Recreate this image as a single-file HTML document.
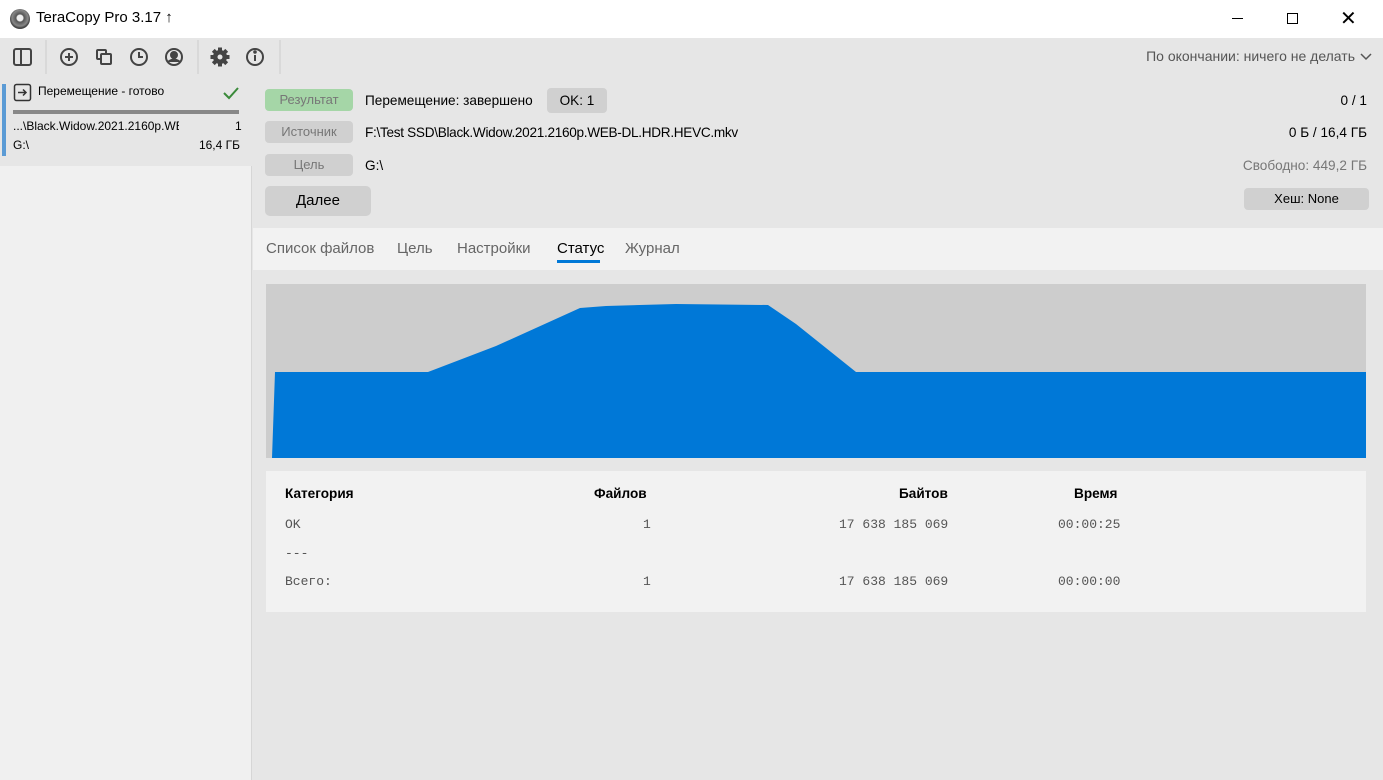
<!DOCTYPE html>
<html><head><meta charset="utf-8"><style>
*{margin:0;padding:0;box-sizing:border-box}
body{width:1383px;height:780px;overflow:hidden;background:#e6e6e6;font-family:"Segoe UI","Liberation Sans",sans-serif;font-size:13.6px;color:#000;position:relative}
.abs{position:absolute}
.title{left:0;top:0;width:1383px;height:38px;background:#fff}
.tb{left:0;top:38px;width:1383px;height:40px;background:#e6e6e6}
.side{left:0;top:78px;width:252px;height:702px;background:#f0f0f0;border-right:1px solid #d6d6d6}
.pill{position:absolute;left:265px;width:88px;height:22px;border-radius:4px;background:#d0d0d0;color:#777;font-size:13px;text-align:center;line-height:22px}
.txt{position:absolute;font-size:13.6px;white-space:nowrap}
.mono{font-family:"Liberation Mono",monospace;font-size:13px;color:#555}
.tab{position:absolute;top:240px;font-size:15px;color:#666}
</style></head><body>
<div class="abs title">
 <div class="abs" style="left:10px;top:9px;width:20px;height:20px;border-radius:50%;background:radial-gradient(circle at 50% 45%,#eee 0 3px,#555 4px,#888 8px,#444 10px)"></div>
 <div class="txt" style="left:36px;top:9px;font-size:15px">TeraCopy Pro 3.17 ↑</div>
 <div class="abs" style="left:1232px;top:18px;width:11px;height:1px;background:#000"></div>
 <div class="abs" style="left:1287px;top:13px;width:11px;height:11px;border:1px solid #000"></div>
 <div class="txt" style="left:1340px;top:6px;font-size:20px;font-weight:300">✕</div>
</div>
<div class="abs tb">
 <svg class="abs" style="left:0;top:0" width="300" height="40" fill="none" stroke="#444" stroke-width="2">
  <rect x="14" y="11" width="17" height="16" rx="2"/><line x1="21" y1="11" x2="21" y2="27"/>
  <line x1="46" y1="2" x2="46" y2="36" stroke="#ccc" stroke-width="1"/>
  <circle cx="69" cy="19" r="8"/><path d="M65 19h8M69 15v8"/>
  <rect x="97" y="12" width="9" height="9" rx="1"/><rect x="101" y="16" width="10" height="10" rx="1" fill="#e6e6e6"/>
  <circle cx="139" cy="19" r="8"/><path d="M139 14v5h4"/>
  <circle cx="174" cy="19" r="8"/><circle cx="174" cy="17" r="3" fill="#444"/><path d="M168 24q6-5 12 0" fill="#444"/>
  <line x1="198" y1="2" x2="198" y2="36" stroke="#ccc" stroke-width="1"/>
  <g stroke="none" fill="#444">
   <circle cx="220" cy="19" r="7"/>
   <rect x="218" y="9.5" width="4" height="19"/>
   <rect x="218" y="9.5" width="4" height="19" transform="rotate(45 220 19)"/>
   <rect x="218" y="9.5" width="4" height="19" transform="rotate(90 220 19)"/>
   <rect x="218" y="9.5" width="4" height="19" transform="rotate(135 220 19)"/>
   <circle cx="220" cy="19" r="2.5" fill="#e6e6e6"/>
  </g>
  <circle cx="255" cy="19" r="8"/><path d="M255 17v6"/><circle cx="255" cy="14" r="0.8" fill="#444"/>
  <line x1="280" y1="2" x2="280" y2="36" stroke="#ccc" stroke-width="1"/>
 </svg>
 <div class="txt" style="right:28px;top:10px;color:#555;font-size:14px">По окончании: ничего не делать</div>
 <svg class="abs" style="left:1360px;top:15px" width="12" height="8"><path d="M1 1l5 5 5-5" stroke="#555" stroke-width="1.5" fill="none"/></svg>
</div>
<div class="abs side">
 <div class="abs" style="left:0;top:0;width:252px;height:88px;background:#e6e6e6"></div>
 <div class="abs" style="left:2px;top:6px;width:4px;height:72px;background:#5b9bd5"></div>
 <svg class="abs" style="left:13px;top:5px" width="20" height="20"><rect x="1.5" y="1.5" width="16" height="16" rx="2" fill="none" stroke="#333" stroke-width="1.5"/><path d="M5 9.5h8M10 6.5l3 3-3 3" stroke="#333" stroke-width="1.5" fill="none"/></svg>
 <div class="txt" style="left:38px;top:6px;font-size:12px">Перемещение - готово</div>
 <svg class="abs" style="left:222px;top:8px" width="18" height="14"><path d="M2 7l5 5 9-10" stroke="#3a8a3a" stroke-width="2" fill="none"/></svg>
 <div class="abs" style="left:13px;top:32px;width:226px;height:4px;background:#888"></div>
 <div class="txt" style="left:13px;top:41px;font-size:12px;width:166px;overflow:hidden">...\Black.Widow.2021.2160p.WEB-DL</div>
 <div class="txt" style="left:235px;top:41px;font-size:12px">1</div>
 <div class="txt" style="left:13px;top:60px;font-size:12px">G:\</div>
 <div class="txt" style="right:11px;top:60px;font-size:12px">16,4 ГБ</div>
</div>
<div class="pill" style="top:89px;background:#a5d6a7">Результат</div>
<div class="txt" style="left:365px;top:93px">Перемещение: завершено</div>
<div class="abs" style="left:547px;top:88px;width:60px;height:25px;border-radius:4px;background:#d0d0d0;text-align:center;line-height:25px">OK: 1</div>
<div class="txt" style="right:16px;top:93px">0 / 1</div>
<div class="pill" style="top:121px">Источник</div>
<div class="txt" style="left:365px;top:125px;letter-spacing:-0.3px">F:\Test SSD\Black.Widow.2021.2160p.WEB-DL.HDR.HEVC.mkv</div>
<div class="txt" style="right:16px;top:125px">0 Б / 16,4 ГБ</div>
<div class="pill" style="top:154px">Цель</div>
<div class="txt" style="left:365px;top:158px">G:\</div>
<div class="txt" style="right:16px;top:158px;color:#777">Свободно: 449,2 ГБ</div>
<div class="abs" style="left:265px;top:186px;width:106px;height:30px;border-radius:5px;background:#d0d0d0;text-align:center;line-height:30px;font-size:15px">Далее</div>
<div class="abs" style="left:1244px;top:188px;width:125px;height:22px;border-radius:4px;background:#d0d0d0;text-align:center;line-height:22px;font-size:13px">Хеш: None</div>
<div class="abs" style="left:253px;top:228px;width:1130px;height:42px;background:#f2f2f2"></div>
<div class="tab" style="left:266px">Список файлов</div>
<div class="tab" style="left:397px">Цель</div>
<div class="tab" style="left:457px">Настройки</div>
<div class="tab" style="left:557px;color:#000">Статус</div>
<div class="abs" style="left:557px;top:260px;width:43px;height:3px;background:#0078d7"></div>
<div class="tab" style="left:625px">Журнал</div>
<svg class="abs" style="left:266px;top:284px" width="1100" height="174">
 <rect width="1100" height="174" fill="#cdcdcd"/>
 <path d="M6 174L9 88 162 88 230 62 314 24 340 22 410 20 502 21 530 40 590 88 1100 88 1100 174Z" fill="#0078d7"/>
</svg>
<div class="abs" style="left:266px;top:471px;width:1100px;height:141px;background:#f2f2f2"></div>
<div class="txt" style="left:285px;top:486px;font-weight:bold">Категория</div>
<div class="txt" style="left:594px;top:486px;font-weight:bold">Файлов</div>
<div class="txt" style="left:899px;top:486px;font-weight:bold">Байтов</div>
<div class="txt" style="left:1074px;top:486px;font-weight:bold">Время</div>
<div class="txt mono" style="left:285px;top:517px">OK</div>
<div class="txt mono" style="left:643px;top:517px">1</div>
<div class="txt mono" style="left:839px;top:517px">17 638 185 069</div>
<div class="txt mono" style="left:1058px;top:517px">00:00:25</div>
<div class="txt mono" style="left:285px;top:546px">---</div>
<div class="txt mono" style="left:285px;top:574px">Всего:</div>
<div class="txt mono" style="left:643px;top:574px">1</div>
<div class="txt mono" style="left:839px;top:574px">17 638 185 069</div>
<div class="txt mono" style="left:1058px;top:574px">00:00:00</div>
</body></html>
